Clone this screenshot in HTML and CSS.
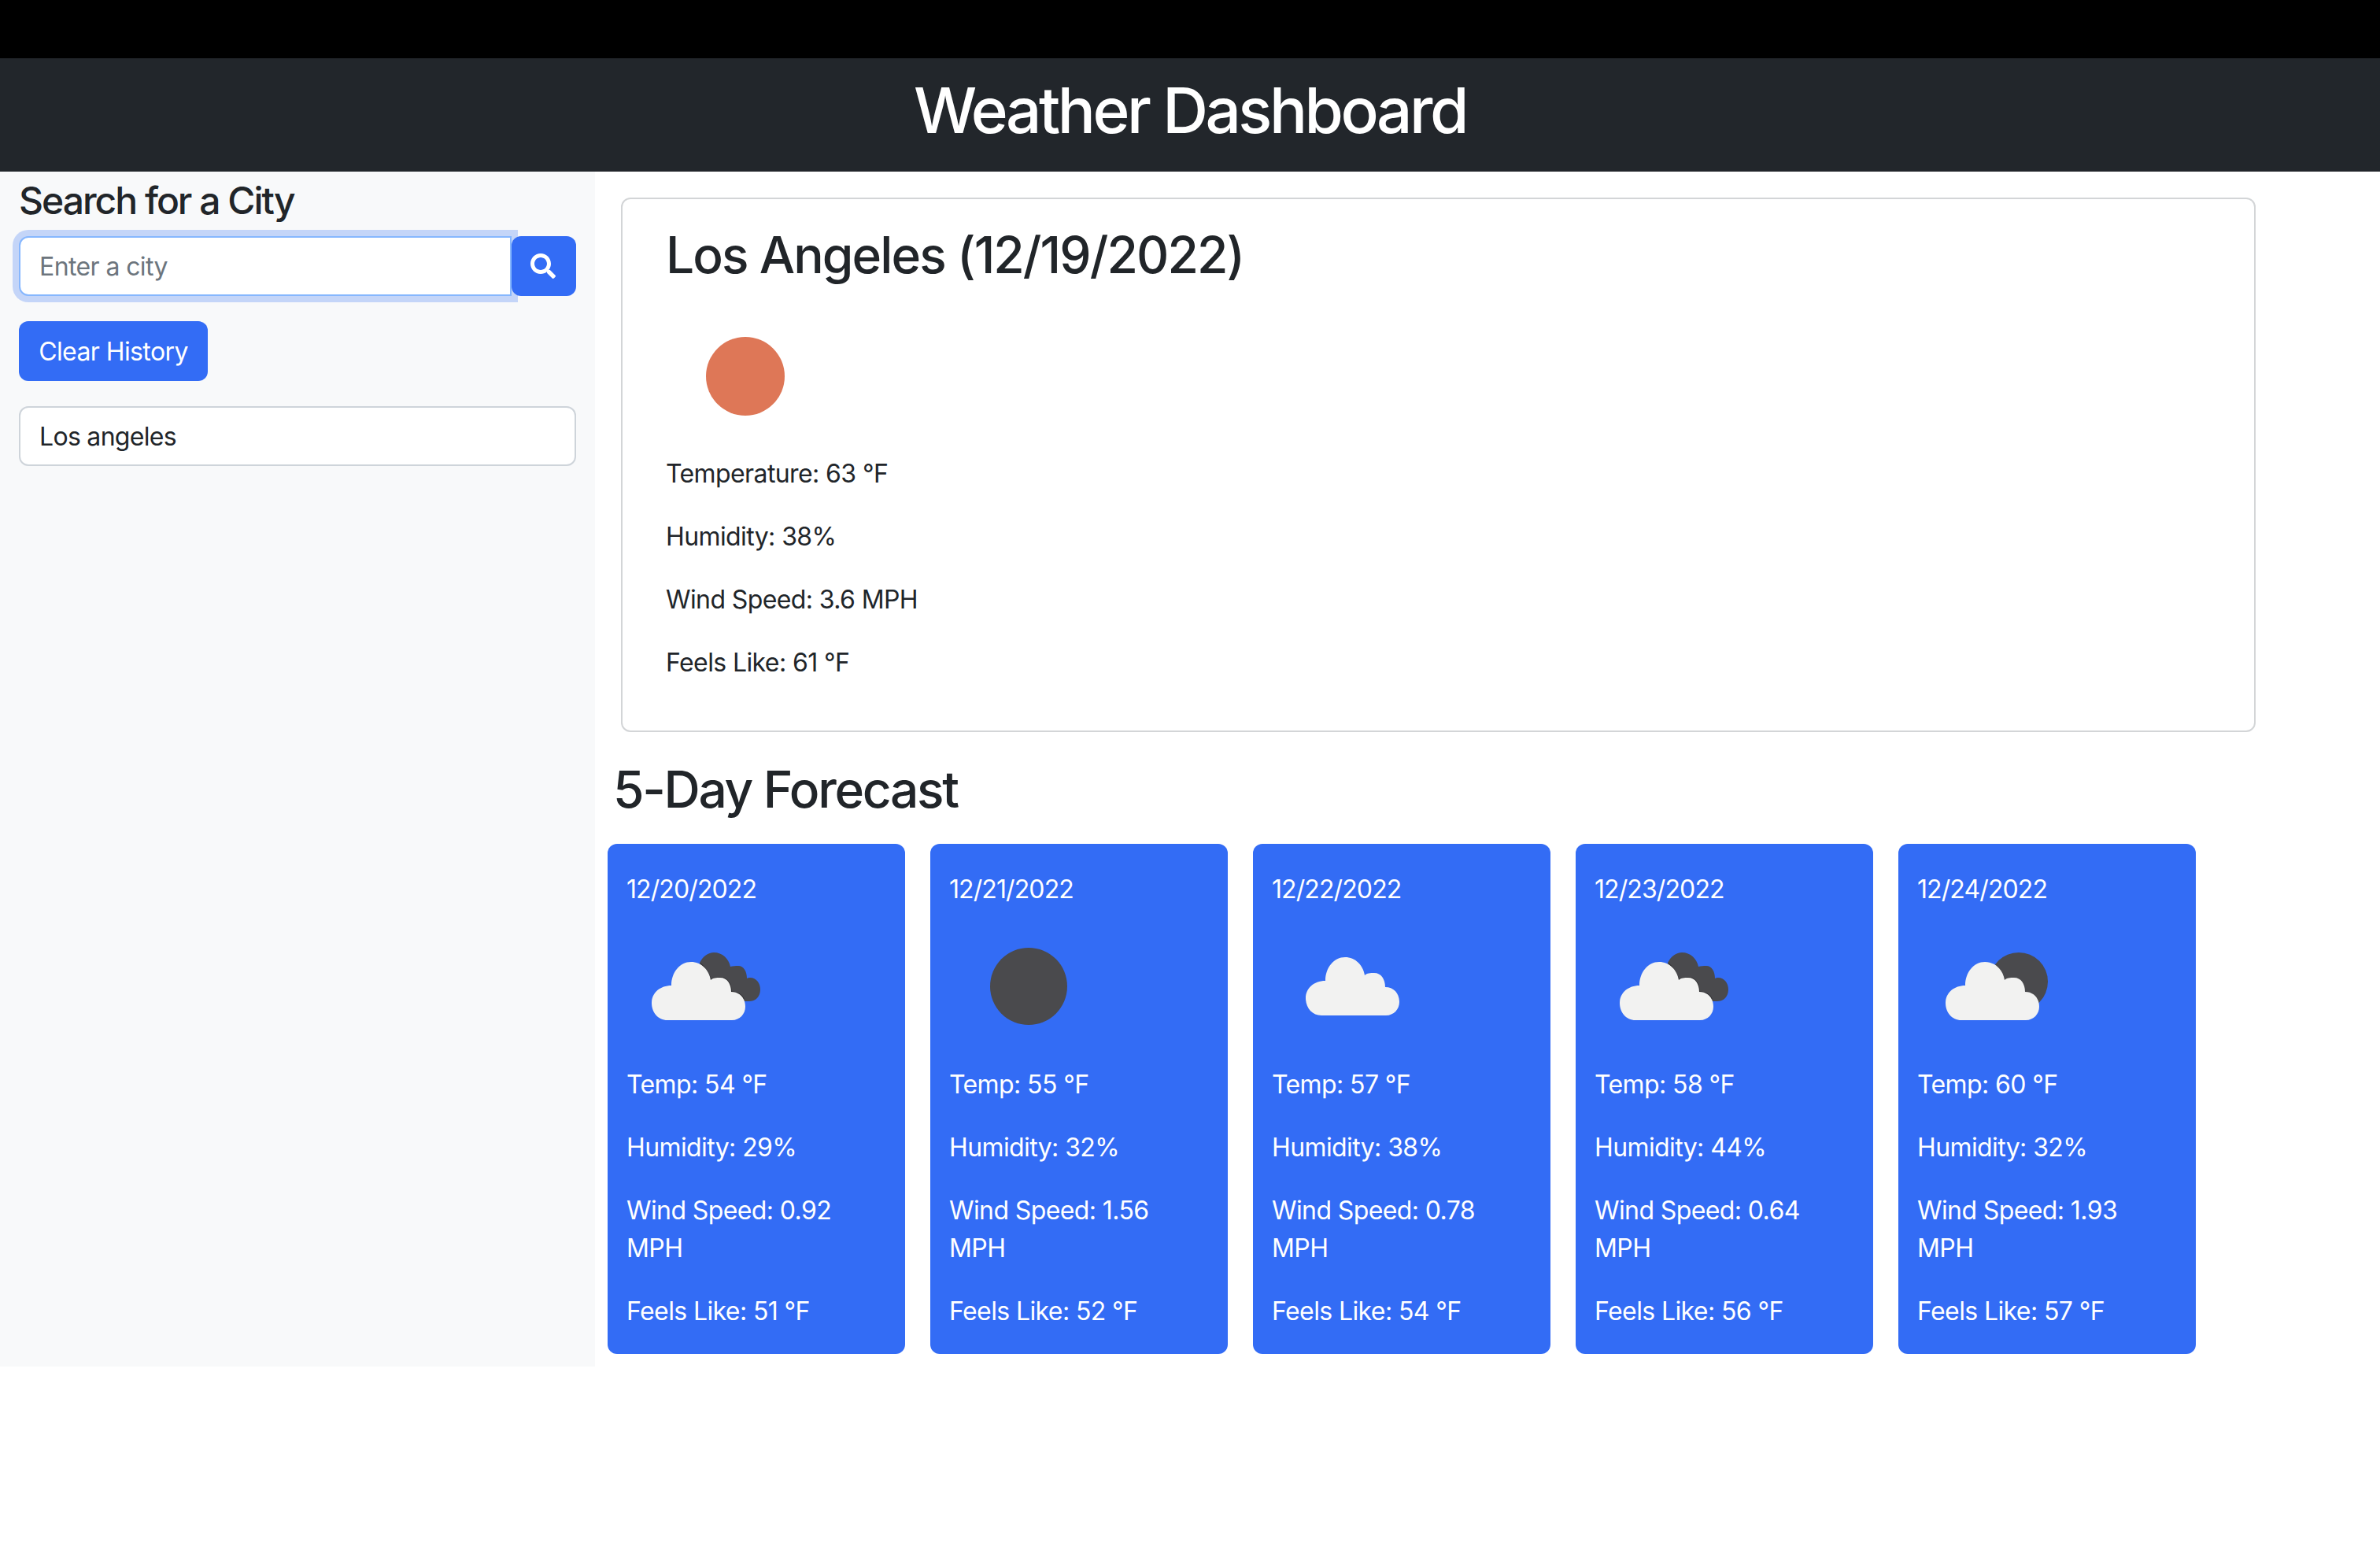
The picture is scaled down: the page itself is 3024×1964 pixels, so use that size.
FILE: index.html
```html
<!DOCTYPE html>
<html lang="en">
<head>
<meta charset="utf-8">
<title>Weather Dashboard</title>
<link rel="stylesheet" href="styles.css">
</head>
<body>
<svg class="defs" width="0" height="0" aria-hidden="true">
  <defs>
    <path id="cloud-shape" d="M52 144C40 144 32 134 32 122C32 110 42 100 57 100C57 83 68 70 82 70C95 70 105 80 107 93C110 90 114 90 119 90C128 90 133 98 133 108C144 108 151 116 151 127C151 136 144 144 134 144Z"/>
  </defs>
  <symbol id="white-cloud" viewBox="0 0 200 200">
    <use href="#cloud-shape" fill="#f2f2f1"/>
  </symbol>
  <symbol id="dark-cloud" viewBox="0 0 200 200">
    <path fill="#4a4a4d" d="M93 71C97 63 104 58 111 58C122 58 130 66 132 76C135 75 139 75 142 75C149 75 153 82 153 91C154 90 156 90 157 90C165 90 170 97 170 105C170 114 164 120 156 120L140 120L100 100Z"/>
    <path fill="none" stroke="#2e2e30" stroke-width="1.5" d="M94 72C101 78 105 85 107 93C110 90 114 90 119 90C128 90 133 98 133 108C141 108 147 112 149 117"/>
  </symbol>
</svg>
<div class="top-bar"></div>
<header class="site-header">
  <h1 class="site-title">Weather Dashboard</h1>
</header>
<div class="layout">
  <aside class="sidebar">
    <h2 class="sidebar-title">Search for a City</h2>
    <form class="search-row">
      <input class="search-input" type="text" placeholder="Enter a city">
      <button class="search-button" type="button" aria-label="Search">
        <svg class="search-icon" viewBox="0 0 512 512"><path fill="#fff" d="M505 442.7L405.3 343c-4.5-4.5-10.6-7-17-7H372c27.6-35.3 44-79.7 44-128C416 93.1 322.9 0 208 0S0 93.1 0 208s93.1 208 208 208c48.3 0 92.7-16.4 128-44v16.3c0 6.4 2.5 12.5 7 17l99.7 99.7c9.4 9.4 24.6 9.4 33.9 0l28.3-28.3c9.4-9.4 9.4-24.6.1-34zM208 336c-70.7 0-128-57.2-128-128 0-70.7 57.2-128 128-128 70.7 0 128 57.2 128 128 0 70.7-57.2 128-128 128z"/></svg>
      </button>
    </form>
    <button class="clear-button" type="button">Clear History</button>
    <div class="history-item">Los angeles</div>
  </aside>
  <main class="content">
    <section class="current">
      <h2 class="current-title">Los Angeles (12/19/2022)</h2>
      <svg class="weather-icon" viewBox="0 0 200 200"><circle cx="101" cy="100" r="50" fill="#de7757"/></svg>
      <p class="stat">Temperature: 63 °F</p>
      <p class="stat">Humidity: 38%</p>
      <p class="stat">Wind Speed: 3.6 MPH</p>
      <p class="stat">Feels Like: 61 °F</p>
    </section>
    <h2 class="forecast-title">5-Day Forecast</h2>
    <div class="forecast-row">
      <article class="day">
        <p class="day-date">12/20/2022</p>
        <svg class="weather-icon day-icon" viewBox="0 0 200 200"><use href="#dark-cloud"/><use href="#white-cloud"/></svg>
        <p class="stat">Temp: 54 °F</p>
        <p class="stat">Humidity: 29%</p>
        <p class="stat">Wind Speed: 0.92 MPH</p>
        <p class="stat stat-last">Feels Like: 51 °F</p>
      </article>
      <article class="day">
        <p class="day-date">12/21/2022</p>
        <svg class="weather-icon day-icon" viewBox="0 0 200 200"><circle cx="101" cy="101" r="49" fill="#4a4a4d"/></svg>
        <p class="stat">Temp: 55 °F</p>
        <p class="stat">Humidity: 32%</p>
        <p class="stat">Wind Speed: 1.56 MPH</p>
        <p class="stat stat-last">Feels Like: 52 °F</p>
      </article>
      <article class="day">
        <p class="day-date">12/22/2022</p>
        <svg class="weather-icon day-icon" viewBox="0 0 200 200"><use href="#white-cloud" x="11" y="-6"/></svg>
        <p class="stat">Temp: 57 °F</p>
        <p class="stat">Humidity: 38%</p>
        <p class="stat">Wind Speed: 0.78 MPH</p>
        <p class="stat stat-last">Feels Like: 54 °F</p>
      </article>
      <article class="day">
        <p class="day-date">12/23/2022</p>
        <svg class="weather-icon day-icon" viewBox="0 0 200 200"><use href="#dark-cloud"/><use href="#white-cloud"/></svg>
        <p class="stat">Temp: 58 °F</p>
        <p class="stat">Humidity: 44%</p>
        <p class="stat">Wind Speed: 0.64 MPH</p>
        <p class="stat stat-last">Feels Like: 56 °F</p>
      </article>
      <article class="day">
        <p class="day-date">12/24/2022</p>
        <svg class="weather-icon day-icon" viewBox="0 0 200 200"><circle cx="129" cy="95" r="37" fill="#4a4a4d"/><use href="#white-cloud" x="4"/></svg>
        <p class="stat">Temp: 60 °F</p>
        <p class="stat">Humidity: 32%</p>
        <p class="stat">Wind Speed: 1.93 MPH</p>
        <p class="stat stat-last">Feels Like: 57 °F</p>
      </article>
    </div>
  </main>
</div>
</body>
</html>
```
FILE: styles.css
```css
* { box-sizing: border-box; }
html, body { margin: 0; padding: 0; background: #fff; }
body {
  font-family: Inter, "Liberation Sans", sans-serif;
  font-size: 32px;
  line-height: 48px;
  color: #212529;
  letter-spacing: -0.6px;
}
.defs { display: block; height: 0; }
.top-bar { height: 74px; background: #000; }
.site-header {
  height: 144px;
  padding-top: 18px;
  background: #22262b;
  text-align: center;
}
.site-title {
  margin: 0;
  font-size: 80px;
  line-height: 96px;
  font-weight: 500;
  color: #fff;
  letter-spacing: -3.5px;
}
.layout { display: flex; align-items: flex-start; }
.sidebar {
  width: 756px;
  height: 1518px;
  padding: 8px 24px 0;
  background: #f8f9fa;
  flex: none;
}
.sidebar-title {
  margin: 0 0 16px;
  font-size: 48px;
  line-height: 58px;
  font-weight: 500;
  letter-spacing: -2px;
}
.search-row { display: flex; margin: 0 0 32px; }
.search-input {
  flex: 1;
  min-width: 0;
  height: 76px;
  padding: 0 24px;
  border: 2px solid #86b7fe;
  border-radius: 12px 0 0 12px;
  outline: none;
  box-shadow: 0 0 0 8px #c4d5f8;
  font: inherit;
  letter-spacing: inherit;
  color: #212529;
  background: #fff;
}
.search-input::placeholder { color: #6c757d; opacity: 1; }
.search-button {
  position: relative;
  width: 82px;
  height: 76px;
  padding: 0 2px 0 0;
  border: 0;
  border-radius: 12px;
  background: #336cf5;
  display: flex;
  align-items: center;
  justify-content: center;
}
.search-icon { width: 32px; height: 32px; display: block; }
.clear-button {
  display: block;
  width: 240px;
  height: 76px;
  padding: 1px 0 0;
  margin: 0 0 32px;
  border: 0;
  border-radius: 12px;
  background: #336cf5;
  color: #fff;
  font: inherit;
  letter-spacing: inherit;
}
.history-item {
  height: 76px;
  padding: 13px 24px 0;
  border: 2px solid #ced4da;
  border-radius: 12px;
  background: #fff;
  line-height: 48px;
  letter-spacing: -0.7px;
}
.content { flex: 1; padding: 33px 0 0 16px; }
.current {
  width: 2077px;
  height: 679px;
  margin-left: 17px;
  padding: 32px 55px;
  border: 2px solid #d3d5d7;
  border-radius: 12px;
}
.current-title {
  margin: 0 0 16px;
  font-size: 64px;
  line-height: 77px;
  font-weight: 500;
  letter-spacing: -1.9px;
}
.weather-icon { display: block; width: 200px; height: 200px; }
.stat { margin: 0 0 32px; }
.stat-last { margin: 0; }
.forecast-title {
  margin: 34px 0 31px 7px;
  font-size: 64px;
  line-height: 77px;
  font-weight: 500;
  letter-spacing: -2.3px;
}
.forecast-row { display: flex; gap: 32px; }
.day {
  width: 378px;
  height: 648px;
  padding: 34px 24px 0;
  border-radius: 12px;
  background: #336cf5;
  color: #fff;
}
.day-date { margin: 0; letter-spacing: -0.9px; }
.day-icon { margin: -2px 0 2px; }
```
